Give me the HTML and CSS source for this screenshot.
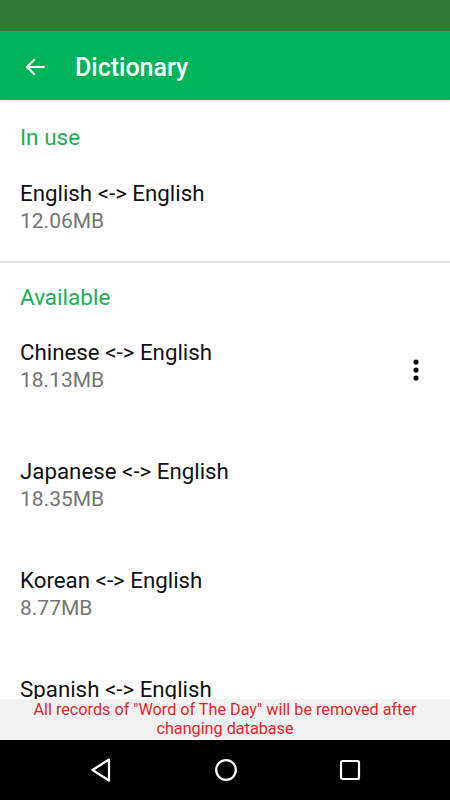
FILE: index.html
```html
<!DOCTYPE html>
<html lang="en">
<head>
  <meta charset="UTF-8" />
  <meta name="viewport" content="width=device-width, initial-scale=1.0"/>
  <title>Dictionary</title>
  <link rel="stylesheet" href="styles.css">
</head>
<body>
  <div class="status-bar"></div>

  <header class="app-bar">
    <svg class="back" width="20" height="18" viewBox="0 0 20 18">
      <path d="M19.5 9H2 M9.8 1.2 L2 9 L9.8 16.8" fill="none" stroke="#fff" stroke-width="2.2"/>
    </svg>
    <div class="app-title">Dictionary</div>
  </header>

  <div class="list">
    <div class="section-title">In use</div>
    <div class="item item-first">
      <div class="item-text">
        <div class="item-name">English &lt;-&gt; English</div>
        <div class="item-size">12.06MB</div>
      </div>
    </div>

    <div class="divider"></div>

    <div class="section-title">Available</div>
    <div class="item item-menu">
      <div class="item-text">
        <div class="item-name">Chinese &lt;-&gt; English</div>
        <div class="item-size">18.13MB</div>
      </div>
      <svg class="more" width="24" height="24" viewBox="0 0 24 24">
        <circle cx="12" cy="4" r="2.6" fill="#000"/>
        <circle cx="12" cy="12" r="2.6" fill="#000"/>
        <circle cx="12" cy="20" r="2.6" fill="#000"/>
      </svg>
    </div>
    <div class="item">
      <div class="item-text">
        <div class="item-name">Japanese &lt;-&gt; English</div>
        <div class="item-size">18.35MB</div>
      </div>
    </div>
    <div class="item">
      <div class="item-text">
        <div class="item-name">Korean &lt;-&gt; English</div>
        <div class="item-size">8.77MB</div>
      </div>
    </div>
    <div class="item">
      <div class="item-text">
        <div class="item-name">Spanish &lt;-&gt; English</div>
        <div class="item-size">23.40MB</div>
      </div>
    </div>
  </div>

  <div class="notice">All records of "Word of The Day" will be removed after changing database</div>

  <nav class="nav-bar">
    <svg width="24" height="26" viewBox="0 0 24 26">
      <path d="M20 2.5 L3.5 13 L20 23.5 Z" fill="none" stroke="#fff" stroke-width="2.2" stroke-linejoin="round"/>
    </svg>
    <svg width="24" height="24" viewBox="0 0 24 24">
      <circle cx="12" cy="12" r="9.8" fill="none" stroke="#fff" stroke-width="2.2"/>
    </svg>
    <svg width="22" height="22" viewBox="0 0 22 22">
      <rect x="2" y="2" width="18" height="18" rx="1.5" fill="none" stroke="#fff" stroke-width="2.2"/>
    </svg>
  </nav>
</body>
</html>
```

FILE: styles.css
```css
:root {
  --green: #00b259;
  --green-dark: #317a33;
  --text-color: #111;
  --muted: #757575;
}
html, body {
  margin: 0;
  height: 100%;
}
body {
  font-family: Roboto, 'Noto Sans', sans-serif;
  background: #fff;
  color: var(--text-color);
  display: flex;
  flex-direction: column;
  height: 800px;
  overflow: hidden;
}
.status-bar {
  height: 31px;
  background: var(--green-dark);
  flex-shrink: 0;
}
.app-bar {
  box-sizing: border-box;
  height: 69px;
  background: var(--green);
  display: flex;
  align-items: center;
  padding: 3px 0 0 25px;
  flex-shrink: 0;
  box-shadow: 0 1px 3px rgba(0,0,0,0.12);
  position: relative;
}
.back {
  margin-right: 30px;
}
.app-title {
  color: #fff;
  font-size: 25px;
  font-weight: 500;
}
.list {
  flex: 1;
  overflow: hidden;
}
.section-title {
  padding: 23px 20px 0;
  font-size: 22.5px;
  line-height: 28px;
  color: #1aae5a;
}
.divider + .section-title {
  padding-top: 20px;
}
.item {
  display: flex;
  align-items: center;
  justify-content: space-between;
  padding: 27px 22px 25px 20px;
}
.item-first {
  padding-top: 28px;
  padding-bottom: 24px;
}
.item-menu {
  margin-bottom: 10px;
}
.item-name {
  font-size: 22.3px;
  line-height: 28px;
}
.item-size {
  font-size: 21px;
  line-height: 29px;
  color: var(--muted);
}
.more {
  margin-top: 6px;
}
.divider {
  height: 2px;
  margin-top: 1px;
  background: #e2e2e2;
}
.notice {
  flex-shrink: 0;
  background: #f2f2f2;
  color: #e3262b;
  font-size: 16.2px;
  line-height: 19px;
  text-align: center;
  padding: 1px 20px 2px;
}
.nav-bar {
  height: 60px;
  background: #000;
  flex-shrink: 0;
  display: flex;
  justify-content: space-around;
  align-items: center;
  padding: 0 38px;
}
```
